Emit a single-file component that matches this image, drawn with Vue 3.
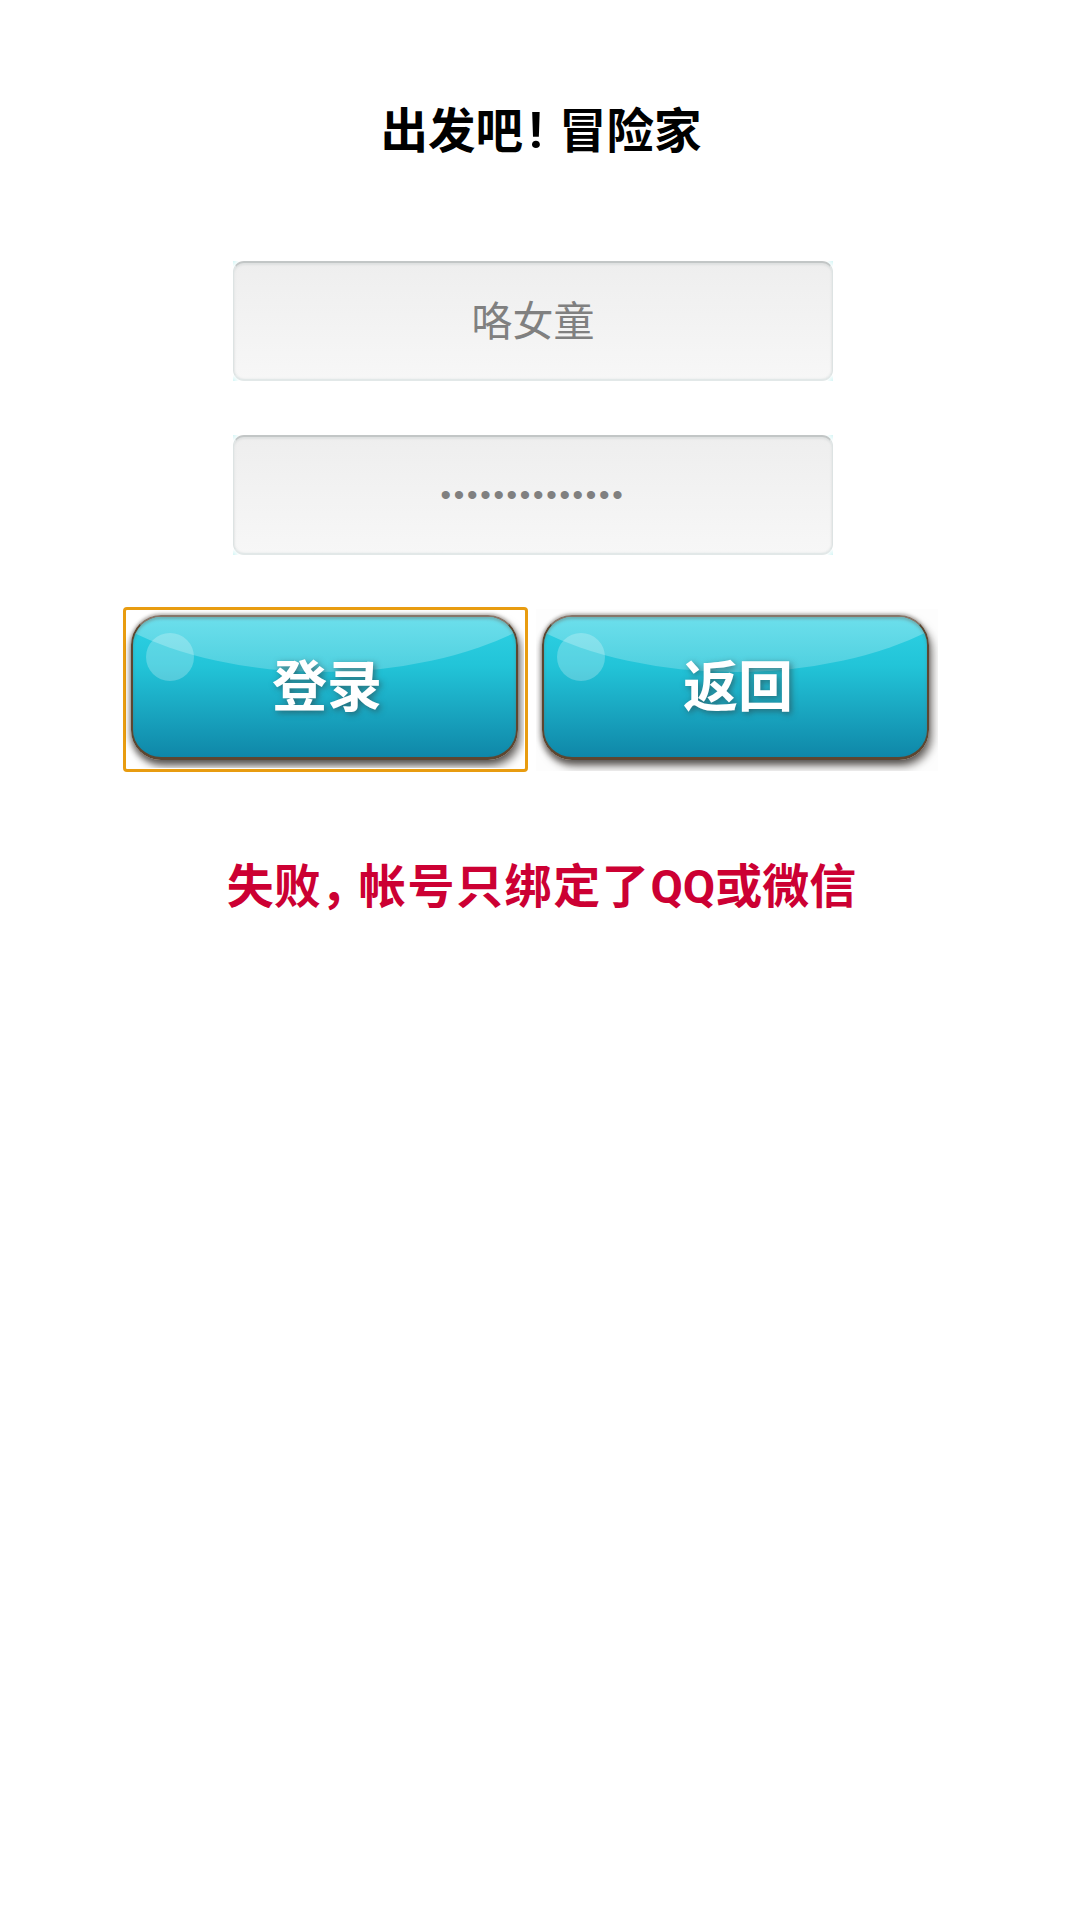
<script setup>
const buttons = [
  { label: '登录', focused: true },
  { label: '返回', focused: false }
]
</script>

<template>
  <main class="page">
    <h1 class="title">出发吧<span class="bang">!</span>冒险家</h1>

    <form class="form" @submit.prevent>
      <div class="field"><div class="well"><span class="name">咯女童</span></div></div>
      <div class="field"><div class="well"><span class="dots">••••••••••••••</span></div></div>
    </form>

    <div class="actions">
      <div v-for="b in buttons" :key="b.label" class="slot" :class="{ focused: b.focused }">
        <button type="button" class="btn">
          <span class="face">
            <span class="gloss"></span>
            <span class="bubble"></span>
            <span class="label">{{ b.label }}</span>
          </span>
        </button>
      </div>
    </div>

    <p class="error">失败<span class="comma">，</span><span class="wide">帐号只绑定了</span>QQ或微信</p>
  </main>
</template>

<style>
html, body { margin: 0; background: #fff; }
</style>

<style scoped>
.page {
  width: 1080px;
  height: 1920px;
  box-sizing: border-box;
  padding-top: 98px;
  background: #fff;
  font-family: Roboto, "Noto Sans CJK SC", sans-serif;
  overflow: hidden;
}
.title {
  margin: 0 0 0 2px;
  height: 67px;
  line-height: 67px;
  font-size: 47.5px;
  font-weight: 700;
  color: #000;
  text-align: center;
}
.bang {
  display: inline-block;
  width: 36px;
  padding-left: 6px;
  box-sizing: border-box;
  text-align: left;
  font-size: 50px;
}
.form {
  display: flex;
  flex-direction: column;
  gap: 54px;
  margin: 96px 0 0 233px;
  width: 600px;
}
.field {
  height: 120px;
  background:
    radial-gradient(circle at 0 0, #d4f5f5, rgba(225, 248, 248, 0) 6px),
    radial-gradient(circle at 100% 0, #d4f5f5, rgba(225, 248, 248, 0) 6px),
    radial-gradient(circle at 0 100%, #d4f5f5, rgba(225, 248, 248, 0) 6px),
    radial-gradient(circle at 100% 100%, #d4f5f5, rgba(225, 248, 248, 0) 6px);
}
.well {
  height: 100%;
  box-sizing: border-box;
  border-radius: 11px;
  border: 1px solid #dde3e3;
  border-top: 2px solid #c2c6c6;
  border-bottom: 2px solid #e2e8e8;
  background: linear-gradient(#eeeeee, #f7f7f7);
  box-shadow: inset 0 2px 2px #dfe1e1, inset 1px 0 2px #e9ebeb, inset -1px 0 2px #e9ebeb;
  display: flex;
  align-items: center;
  justify-content: center;
  color: #808080;
}
.name { font-size: 41px; font-weight: 400; line-height: 1; padding-top: 3px; }
.dots {
  font-family: "Liberation Sans", sans-serif;
  font-size: 30px;
  letter-spacing: 2.7px;
  line-height: 1;
}
.actions {
  display: flex;
  gap: 6px;
  margin: 52px 0 0 123px;
}
.slot {
  width: 405px;
  height: 165px;
  box-sizing: border-box;
  padding: 2px 0 0 2px;
  border: 3px solid transparent;
  border-radius: 4px;
}
.slot.focused { border-color: #e89c10; }
.btn {
  display: flex;
  align-items: flex-start;
  width: 402px;
  height: 162px;
  margin: -3px 0 0 -3px;
  padding: 6px 0 0 6px;
  box-sizing: border-box;
  border: 0;
  background: #fdfdfd;
  font: inherit;
  overflow: hidden;
}
.slot.focused .btn { background: transparent; width: 399px; height: 159px; }
.face {
  position: relative;
  display: block;
  flex: none;
  width: 387px;
  height: 145px;
  box-sizing: border-box;
  border: 2px solid #5d4630;
  border-top-color: #86766a;
  border-bottom-width: 3px;
  border-radius: 30px;
  background: linear-gradient(#2fd2e4 0%, #22c4d8 35%, #1aa8c2 65%, #0f87a8 100%);
  box-shadow:
    3px 6px 8px rgba(25, 20, 15, .6),
    -2px 3px 5px rgba(25, 20, 15, .3),
    0 -2px 3px rgba(60, 50, 40, .25);
  overflow: hidden;
}
.face::after {
  content: "";
  position: absolute;
  inset: 0;
  border-radius: 28px;
  box-shadow: inset 0 2px 3px rgba(110, 100, 90, .4);
}
.gloss {
  position: absolute;
  left: -89px;
  top: -239px;
  width: 560px;
  height: 294px;
  border-radius: 50%;
  background: linear-gradient(to bottom, rgba(255, 255, 255, .3) 80%, rgba(255, 255, 255, .2) 100%);
}
.bubble {
  position: absolute;
  left: 13px;
  top: 16px;
  width: 48px;
  height: 48px;
  border-radius: 50%;
  background: rgba(255, 255, 255, .24);
}
.label {
  position: absolute;
  left: 5px;
  right: 0;
  top: 31px;
  line-height: 78px;
  text-align: center;
  font-size: 55px;
  font-weight: 700;
  color: #fff;
  text-shadow: 2px 2px 6px rgba(50, 50, 50, .55);
}
.error {
  margin: 81px 0 0 3px;
  height: 67px;
  line-height: 67px;
  font-size: 47px;
  font-weight: 700;
  color: #cc0033;
  text-align: center;
}
.comma { letter-spacing: -9px; }
.wide { letter-spacing: 1.6px; }
</style>
